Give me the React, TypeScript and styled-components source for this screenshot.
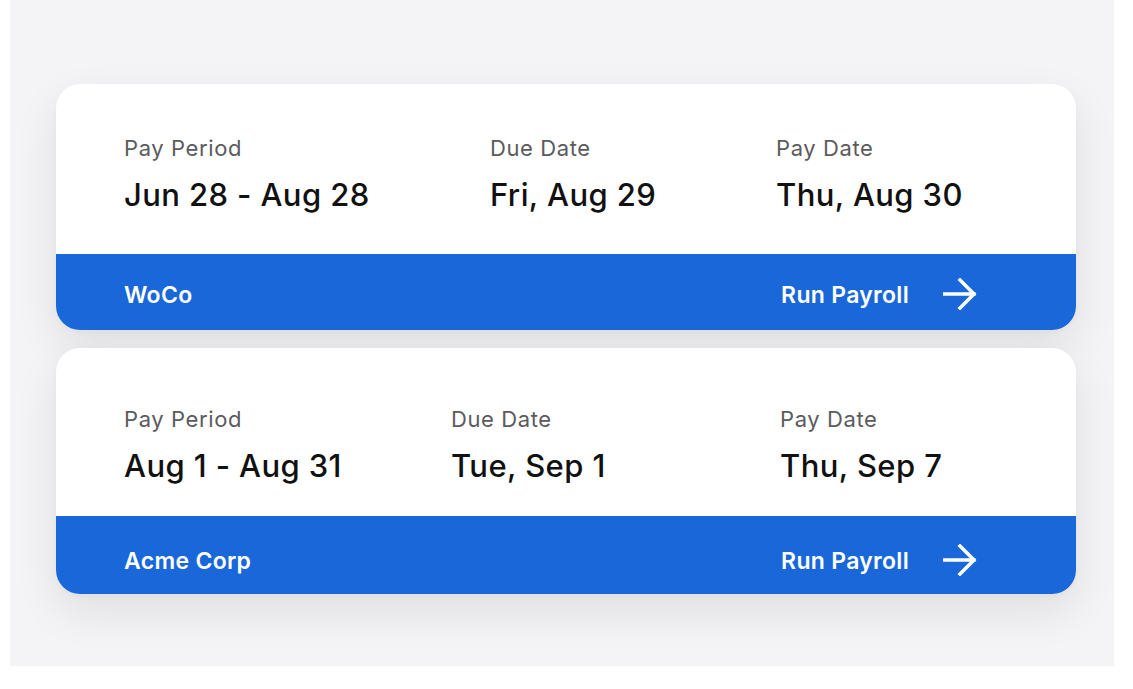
import styled, { createGlobalStyle } from "styled-components";

const GlobalStyle = createGlobalStyle`
  html, body {
    margin: 0;
    padding: 0;
    background: #ffffff;
    font-family: Inter, "Noto Sans", "Liberation Sans", sans-serif;
  }
`;

interface PayrollRun {
  company: string;
  period: string;
  due: string;
  pay: string;
  columns: string;
  topPad: number;
  barHeight: number;
  barShift: number;
}

const runs: PayrollRun[] = [
  {
    company: "WoCo",
    period: "Jun 28 - Aug 28",
    due: "Fri, Aug 29",
    pay: "Thu, Aug 30",
    columns: "366px 286px 1fr",
    topPad: 52,
    barHeight: 76,
    barShift: 6,
  },
  {
    company: "Acme Corp",
    period: "Aug 1 - Aug 31",
    due: "Tue, Sep 1",
    pay: "Thu, Sep 7",
    columns: "327px 329px 1fr",
    topPad: 59,
    barHeight: 78,
    barShift: 12,
  },
];

const ArrowIcon = () => (
  <svg width="34" height="32" viewBox="0 0 34 32" fill="none">
    <path
      d="M1 16H31M17 2L31 16L17 30"
      stroke="#ffffff"
      strokeWidth="3.5"
      strokeLinecap="square"
    />
  </svg>
);

const App = () => {
  return (
    <>
      <GlobalStyle />
      <Page>
        <Panel>
          <CardList>
            {runs.map((run) => (
              <Card key={run.company}>
                <Details $columns={run.columns} $topPad={run.topPad}>
                  <Field>
                    <Label>Pay Period</Label>
                    <Value>{run.period}</Value>
                  </Field>
                  <Field>
                    <Label>Due Date</Label>
                    <Value>{run.due}</Value>
                  </Field>
                  <Field>
                    <Label>Pay Date</Label>
                    <Value>{run.pay}</Value>
                  </Field>
                </Details>
                <Footer $height={run.barHeight} $shift={run.barShift}>
                  <Company>{run.company}</Company>
                  <RunButton>
                    Run Payroll
                    <ArrowIcon />
                  </RunButton>
                </Footer>
              </Card>
            ))}
          </CardList>
        </Panel>
      </Page>
    </>
  );
};

export default App;

const Page = styled.div`
  padding-left: 10px;
  width: 1133px;
  height: 689px;
  box-sizing: border-box;
`;

const Panel = styled.div`
  width: 1104px;
  height: 666px;
  background: #f4f4f6;
  padding: 84px 0 0 46px;
  box-sizing: border-box;
`;

const CardList = styled.div`
  display: flex;
  flex-direction: column;
  gap: 18px;
  width: 1020px;
`;

const Card = styled.div`
  background: #ffffff;
  border-radius: 24px;
  overflow: hidden;
  box-shadow: 0 18px 44px rgba(20, 20, 40, 0.09), 0 2px 6px rgba(20, 20, 40, 0.03);
`;

const Details = styled.div<{ $columns: string; $topPad: number }>`
  display: grid;
  grid-template-columns: ${(p) => p.$columns};
  padding: ${(p) => p.$topPad}px 68px 0 68px;
  height: ${(p) => (p.$topPad > 52 ? 168 : 170) - p.$topPad}px;
`;

const Field = styled.div`
  display: flex;
  flex-direction: column;
  gap: 16px;
`;

const Label = styled.div`
  font-size: 22px;
  line-height: 25px;
  letter-spacing: 0.6px;
  color: #5b5b5e;
  font-weight: 400;
`;

const Value = styled.div`
  font-size: 31px;
  line-height: 36px;
  letter-spacing: 0.4px;
  color: #111111;
  font-weight: 500;
`;

const Footer = styled.div<{ $height: number; $shift: number }>`
  display: flex;
  align-items: center;
  justify-content: space-between;
  height: ${(p) => p.$height}px;
  background: #1967d8;
  padding: ${(p) => p.$shift}px 99px 0 68px;
  box-sizing: border-box;
`;

const Company = styled.div`
  color: #ffffff;
  font-size: 23px;
  font-weight: 600;
  letter-spacing: 0.3px;
`;

const RunButton = styled.div`
  display: flex;
  align-items: center;
  gap: 34px;
  color: #ffffff;
  font-size: 23px;
  font-weight: 600;
  letter-spacing: 0.3px;

  svg {
    margin-top: -2px;
  }
`;
